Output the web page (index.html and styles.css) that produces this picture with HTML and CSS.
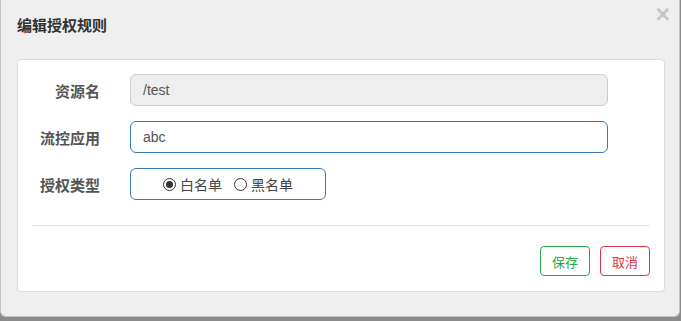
FILE: index.html
```html
<!DOCTYPE html>
<html lang="zh-CN">
<head>
    <meta charset="UTF-8">
    <title>编辑授权规则</title>
    <link rel="stylesheet" href="styles.css">
</head>
<body>
    <div class="dialog">
        <div class="dialog-header">
            <h3 class="dialog-title">编辑授权规则</h3>
            <span class="close">×</span>
        </div>
        <div class="card">
            <div class="form-row">
                <label class="form-label">资源名</label>
                <input class="form-input" type="text" value="/test" disabled>
            </div>
            <div class="form-row">
                <label class="form-label">流控应用</label>
                <input class="form-input active" type="text" value="abc">
            </div>
            <div class="form-row">
                <label class="form-label">授权类型</label>
                <div class="radio-box">
                    <label class="radio"><input type="radio" name="strategy" checked> 白名单</label>
                    <label class="radio"><input type="radio" name="strategy"> 黑名单</label>
                </div>
            </div>
            <div class="divider"></div>
            <div class="actions">
                <button class="btn btn-save">保存</button>
                <button class="btn btn-cancel">取消</button>
            </div>
        </div>
    </div>
</body>
</html>
```

FILE: styles.css
```css
body { margin: 0; background-color: #8a8a8a; font-family: "Liberation Sans", "Noto Sans CJK SC", sans-serif; height: 321px; overflow: hidden; }
.dialog { width: 678px; height: 316px; background-color: #efefef; border: 1px solid #c4c4c4; border-top: none; border-radius: 0 0 6px 6px; }
.dialog-header { display: flex; justify-content: space-between; align-items: flex-start; height: 59px; padding: 0 9px 0 16px; }
.dialog-title { margin: 17px 0 0; font-size: 15px; font-weight: bold; color: #333; line-height: 18px; }
.close { margin-top: 1px; font-size: 25px; font-weight: bold; color: #c6c6c6; line-height: 26px; }
.card { margin-left: 16px; width: 646px; height: 231px; background-color: #fff; border: 1px solid #dcdcdc; border-radius: 4px; }
.form-row { display: flex; align-items: center; margin-top: 14px; height: 32px; }
.form-row + .form-row { margin-top: 15px; }
.form-label { width: 82px; text-align: right; margin-right: 30px; font-size: 15px; font-weight: bold; color: #555; }
.form-input { box-sizing: border-box; width: 478px; height: 32px; padding: 0 12px; font-family: inherit; font-size: 14px; color: #555; background-color: #fff; border: 1px solid #ccc; border-radius: 6px; outline: none; }
.form-input:disabled { background-color: #eee; color: #555; }
.form-input.active { border-color: #3a79b6; }
.radio-box { box-sizing: border-box; width: 196px; height: 32px; display: flex; align-items: center; justify-content: center; gap: 12px; border: 1px solid #3a79b6; border-radius: 6px; }
.radio { display: flex; align-items: center; gap: 4px; font-size: 14px; color: #444; }
.radio input { appearance: none; margin: 0; width: 13px; height: 13px; border: 1px solid #333; border-radius: 50%; display: flex; align-items: center; justify-content: center; }
.radio input:checked::after { content: ""; width: 7px; height: 7px; border-radius: 50%; background-color: #333; }
.divider { margin: 25px 14px 0; border-top: 1px solid #e5e5e5; }
.actions { display: flex; justify-content: flex-end; gap: 10px; margin: 20px 14px 0; }
.btn { width: 50px; height: 30px; padding: 0; font-family: inherit; font-size: 13px; background-color: #fff; border-radius: 4px; border: 1px solid; }
.btn-save { color: #28a745; border-color: #28a745; }
.btn-cancel { color: #dc3545; border-color: #dc3545; }
```
